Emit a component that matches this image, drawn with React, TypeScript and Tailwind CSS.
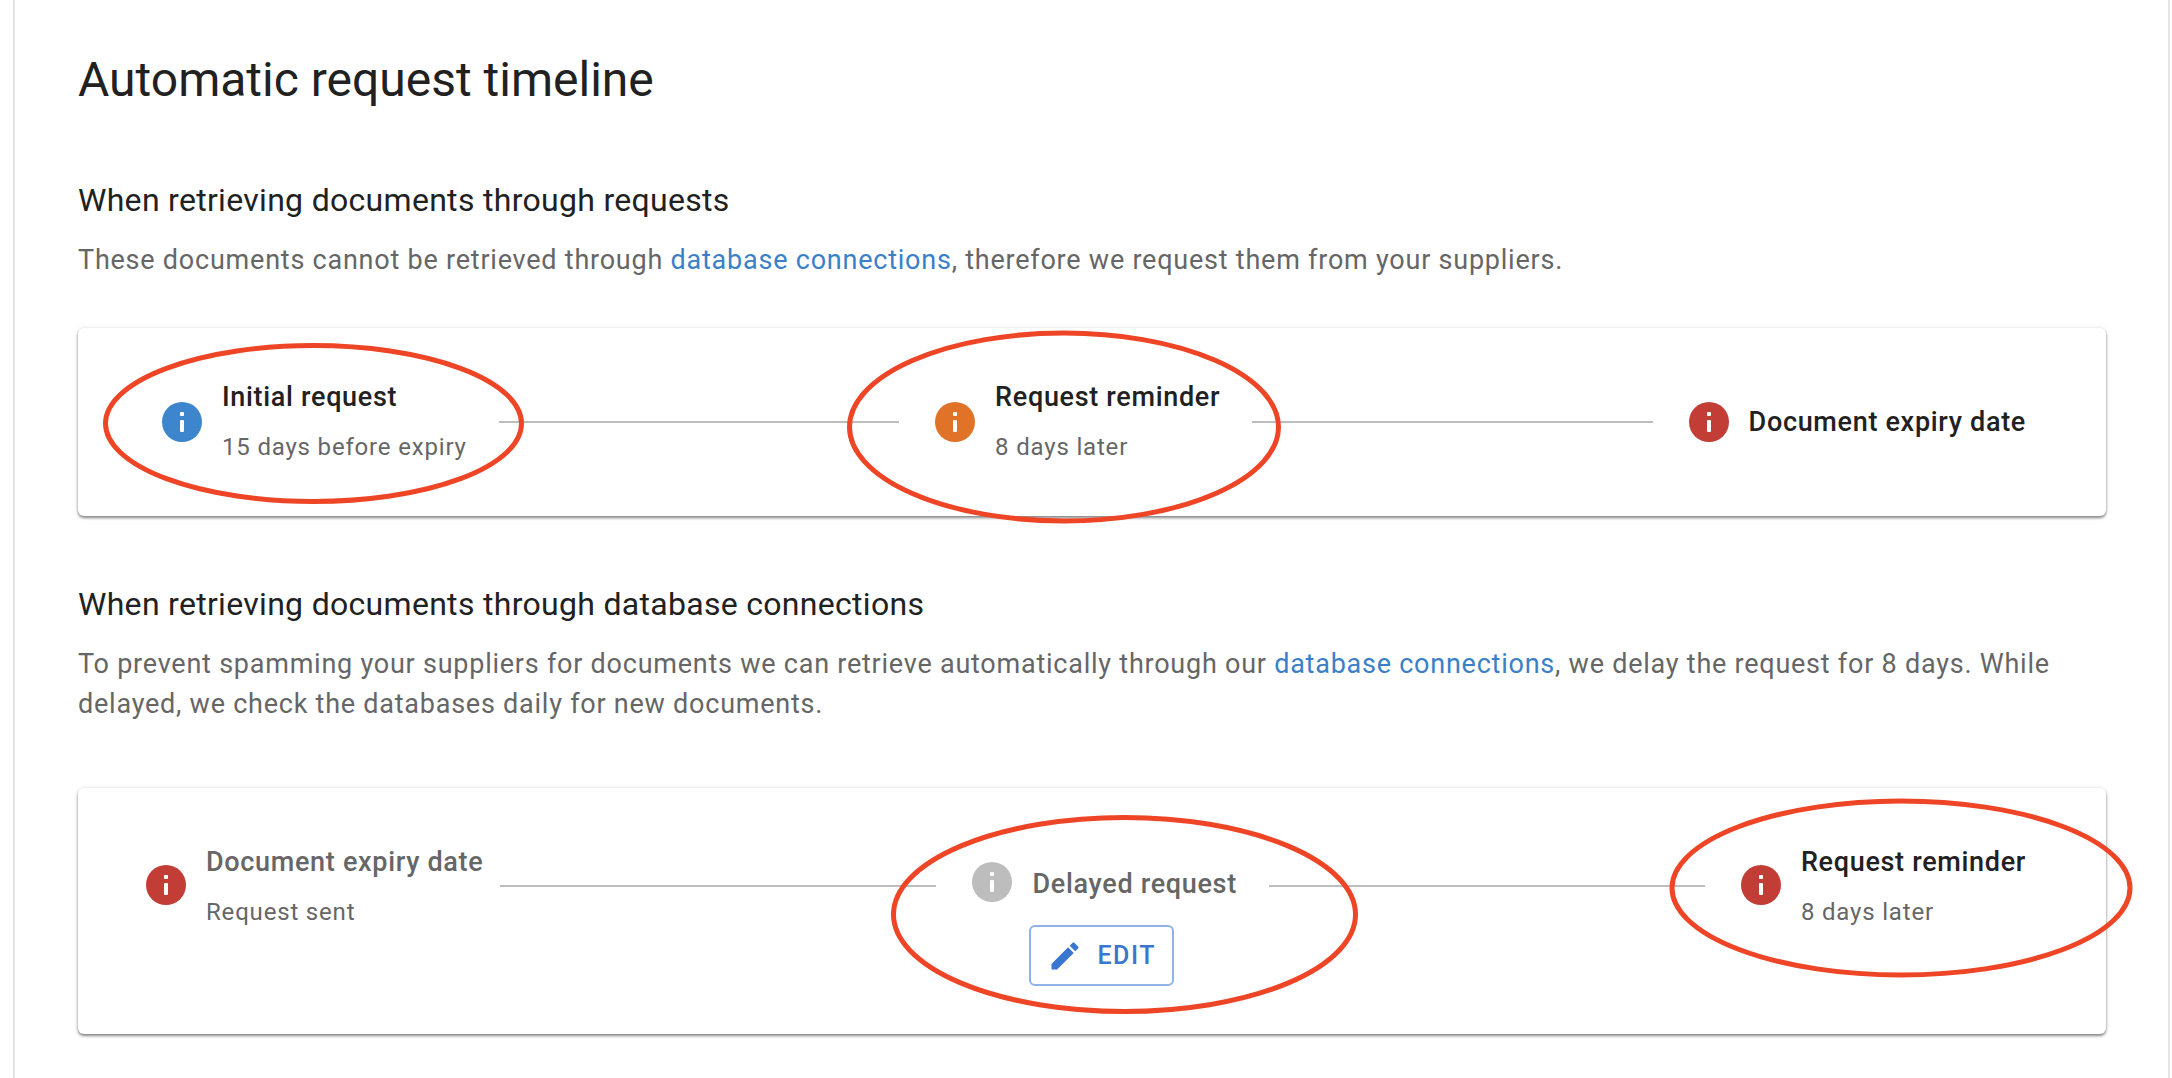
import React from 'react'

const FONT = "font-['Roboto',sans-serif]"

const InfoDot: React.FC<{ color: string }> = ({ color }) => (
  <svg width="40" height="40" viewBox="0 0 40 40" className="shrink-0">
    <circle cx="20" cy="20" r="20" fill={color} />
    <rect x="18" y="10" width="4" height="4" rx="0.8" fill="#fff" />
    <rect x="18" y="18" width="4" height="12" rx="1" fill="#fff" />
  </svg>
)

const Connector: React.FC<{ className?: string }> = ({ className }) => (
  <div className={`h-[2px] flex-1 bg-[#bdbdbd] ${className ?? ''}`} />
)

interface StepProps {
  color: string
  title: string
  sub?: string
  muted?: boolean
  textClass?: string
}

const Step: React.FC<StepProps> = ({ color, title, sub, muted, textClass }) => (
  <div className="flex h-[92px] items-center gap-[20px]">
    <InfoDot color={color} />
    <div className={`flex flex-col gap-[18px] ${textClass ?? ''}`}>
      <div className={`text-[27px] leading-[32px] font-medium tracking-[0.68px] whitespace-nowrap ${muted ? 'text-[#666666]' : 'text-[#212121]'}`}>
        {title}
      </div>
      {sub && <div className="text-[24px] leading-[32px] tracking-[0.82px] whitespace-nowrap text-[#666666]">{sub}</div>}
    </div>
  </div>
)

const Annotations = () => (
  <svg className="pointer-events-none absolute top-0 left-0" width="2172" height="1078" viewBox="0 0 2172 1078" fill="none">
    <ellipse cx="313.5" cy="423.5" rx="208" ry="78" stroke="#ee4527" strokeWidth="5" />
    <ellipse cx="1064" cy="427" rx="214.5" ry="94" stroke="#ee4527" strokeWidth="5" />
    <ellipse cx="1124.5" cy="914.5" rx="231" ry="97" stroke="#ee4527" strokeWidth="5" />
    <ellipse cx="1901" cy="888" rx="229" ry="87" stroke="#ee4527" strokeWidth="5" />
  </svg>
)

export default function App() {
  return (
    <div className={`relative h-[1078px] w-[2172px] overflow-hidden bg-white ${FONT}`}>
      <div className="mr-[2px] ml-[13px] flex h-full flex-col border-x-2 border-[#e4e4e4] pr-[62px] pl-[63px]">
        <h1 className="mt-[52px] text-[48px] leading-[56px] font-normal text-[#212121]">Automatic request timeline</h1>

        <h2 className="mt-[72px] text-[32px] leading-[40px] font-normal tracking-[0.3px] text-[#212121]">When retrieving documents through requests</h2>
        <p className="mt-[20px] text-[27px] leading-[40px] tracking-[0.77px] text-[#666666]">
          These documents cannot be retrieved through <span className="text-[#3b7fc9]">database connections</span>, therefore we request them from your suppliers.
        </p>

        <div className="mt-[48px] flex h-[188px] items-center rounded-[6px] bg-white pr-[80px] pl-[84px] shadow-[0_2px_3px_rgba(0,0,0,0.45),0_0_5px_rgba(0,0,0,0.1)]">
          <Step color="#3d85cc" title="Initial request" sub="15 days before expiry" />
          <Connector className="mr-[36px] ml-[32px]" />
          <Step color="#e07328" title="Request reminder" sub="8 days later" />
          <Connector className="mr-[36px] ml-[32px]" />
          <Step color="#c23d36" title="Document expiry date" />
        </div>

        <h2 className="mt-[68px] text-[32px] leading-[40px] font-normal tracking-[0.3px] text-[#212121]">When retrieving documents through database connections</h2>
        <p className="mt-[20px] text-[27px] leading-[40px] tracking-[0.76px] text-[#666666]">
          To prevent spamming your suppliers for documents we can retrieve automatically through our <span className="text-[#3b7fc9]">database connections</span>, we delay the request for 8 days. While delayed, we check the databases daily for new documents.
        </p>

        <div className="mt-[64px] flex h-[246px] items-start rounded-[6px] bg-white pt-[51px] pr-[80px] pl-[68px] shadow-[0_2px_3px_rgba(0,0,0,0.45),0_0_5px_rgba(0,0,0,0.1)]">
          <Step color="#c23d36" title="Document expiry date" sub="Request sent" muted textClass="pt-[4px]" />
          <Connector className="mt-[46px] mr-[36px] ml-[17px]" />
          <div className="-mt-[3px] flex flex-col">
            <Step color="#bdbdbd" title="Delayed request" muted textClass="pt-[3px]" />
            <button className="mt-[-3px] ml-[57px] flex h-[61px] w-[145px] items-center gap-[14px] rounded-[6px] border-2 border-[#8fb3e6] pl-[16px] text-[25px] font-medium tracking-[1.5px] text-[#3a75cf]">
              <svg width="36" height="36" viewBox="0 0 24 24" fill="#3a75cf">
                <path d="M3 17.46v3.04c0 .28.22.5.5.5h3.04c.13 0 .26-.05.35-.15L17.81 9.94l-3.75-3.75L3.15 17.1c-.1.1-.15.22-.15.36zM20.71 7.04c.39-.39.39-1.02 0-1.41l-2.34-2.34c-.39-.39-1.02-.39-1.41 0l-1.83 1.83 3.75 3.75 1.83-1.83z" />
              </svg>
              EDIT
            </button>
          </div>
          <Connector className="mt-[46px] mr-[36px] ml-[32px]" />
          <Step color="#c23d36" title="Request reminder" sub="8 days later" textClass="pt-[4px]" />
        </div>
      </div>
      <Annotations />
    </div>
  )
}
